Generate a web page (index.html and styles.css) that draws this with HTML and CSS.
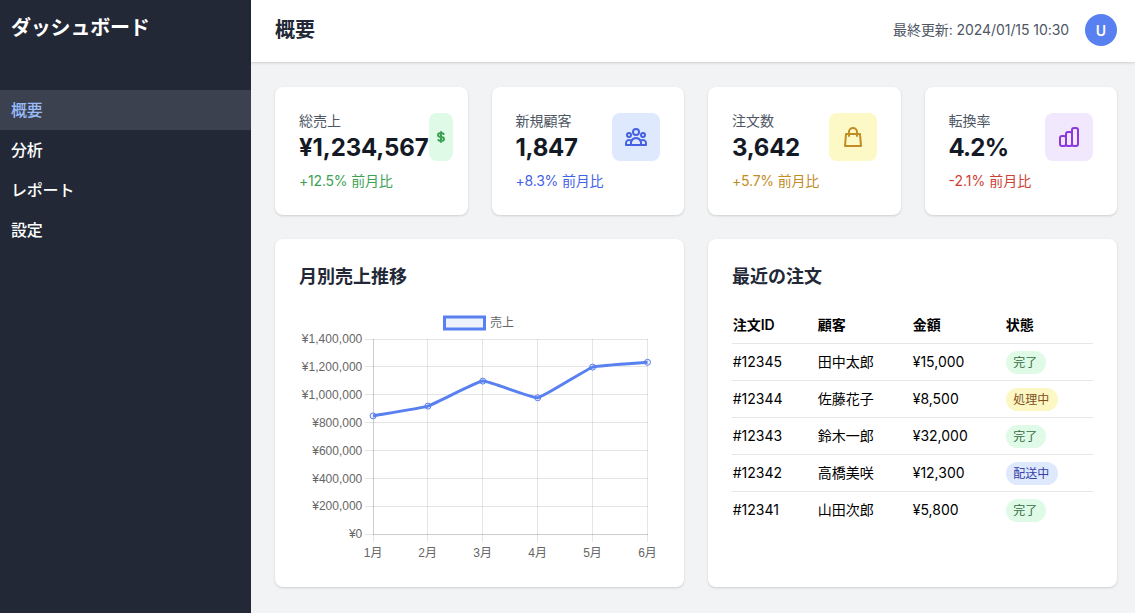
FILE: index.html
```html
<!DOCTYPE html>
<html lang="ja">
<head>
<meta charset="utf-8">
<title>ダッシュボード</title>
<link rel="stylesheet" href="styles.css">
</head>
<body>
<div class="app">
  <aside class="sidebar">
    <h1 class="brand">ダッシュボード</h1>
    <nav class="nav">
      <a class="nav-item active">概要</a>
      <a class="nav-item">分析</a>
      <a class="nav-item">レポート</a>
      <a class="nav-item">設定</a>
    </nav>
  </aside>
  <div class="main">
    <header class="header">
      <h2 class="page-title">概要</h2>
      <div class="header-right">
        <span class="updated">最終更新: 2024/01/15 10:30</span>
        <div class="avatar">U</div>
      </div>
    </header>
    <main class="content">
      <section class="stats">
        <div class="card stat green">
          <div class="stat-text"><p class="label">総売上</p><p class="value">¥1,234,567</p><p class="delta">+12.5% 前月比</p></div>
          <div class="icon narrow"><svg viewBox="0 0 24 24"><path d="M12 8c-1.657 0-3 .895-3 2s1.343 2 3 2 3 .895 3 2-1.343 2-3 2m0-8c1.11 0 2.08.402 2.599 1M12 8V7m0 1v8m0 0v1m0-1c-1.11 0-2.08-.402-2.599-1"/></svg></div>
        </div>
        <div class="card stat blue">
          <div class="stat-text"><p class="label">新規顧客</p><p class="value">1,847</p><p class="delta">+8.3% 前月比</p></div>
          <div class="icon"><svg viewBox="0 0 24 24"><path d="M17 20h5v-2a3 3 0 00-5.356-1.857M17 20H7m10 0v-2c0-.656-.126-1.283-.356-1.857M7 20H2v-2a3 3 0 015.356-1.857M7 20v-2c0-.656.126-1.283.356-1.857m0 0a5.002 5.002 0 019.288 0M15 7a3 3 0 11-6 0 3 3 0 016 0zm6 3a2 2 0 11-4 0 2 2 0 014 0zM7 10a2 2 0 11-4 0 2 2 0 014 0z"/></svg></div>
        </div>
        <div class="card stat yellow">
          <div class="stat-text"><p class="label">注文数</p><p class="value">3,642</p><p class="delta">+5.7% 前月比</p></div>
          <div class="icon"><svg viewBox="0 0 24 24"><path d="M16 11V7a4 4 0 00-8 0v4M5 9h14l1 12H4L5 9z"/></svg></div>
        </div>
        <div class="card stat purple">
          <div class="stat-text"><p class="label">転換率</p><p class="value">4.2%</p><p class="delta">-2.1% 前月比</p></div>
          <div class="icon"><svg viewBox="0 0 24 24"><path d="M9 19v-6a2 2 0 00-2-2H5a2 2 0 00-2 2v6a2 2 0 002 2h2a2 2 0 002-2zm0 0V9a2 2 0 012-2h2a2 2 0 012 2v10m-6 0a2 2 0 002 2h2a2 2 0 002-2m0 0V5a2 2 0 012-2h2a2 2 0 012 2v14a2 2 0 01-2 2h-2a2 2 0 01-2-2z"/></svg></div>
        </div>
      </section>
      <section class="panels">
        <div class="card panel">
          <h3 class="panel-title">月別売上推移</h3>
          <svg class="chart" viewBox="299 307 361 256">
            <rect class="legend-box" x="444.5" y="317" width="40" height="12"/>
            <text x="490" y="327">売上</text>
            <g class="grid">
              <path d="M365 339.5H648M365 366.5H648M365 394.5H648M365 422.5H648M365 450.5H648M365 478.5H648M365 506.5H648M365 534.5H648"/>
              <path d="M373.5 339V542M427.5 339V542M482.5 339V542M537.5 339V542M592.5 339V542M647.5 339V542"/>
              <path d="M373.5 339V534M373 534.5H648"/>
            </g>
            <g class="y-labels">
              <text x="362.300" y="343" textLength="60.500">¥1,400,000</text>
              <text x="362.300" y="371" textLength="60.500">¥1,200,000</text>
              <text x="362.300" y="399" textLength="60.500">¥1,000,000</text>
              <text x="362.300" y="427">¥800,000</text>
              <text x="362.300" y="455">¥600,000</text>
              <text x="362.300" y="483">¥400,000</text>
              <text x="362.300" y="510">¥200,000</text>
              <text x="362.300" y="538">¥0</text>
            </g>
            <g class="x-labels">
              <text x="373.200" y="557">1月</text>
              <text x="427.700" y="557">2月</text>
              <text x="482.700" y="557">3月</text>
              <text x="537.700" y="557">4月</text>
              <text x="592.500" y="557">5月</text>
              <text x="647.500" y="557">6月</text>
            </g>
            <path class="line" d="M373.100 415.900C378.600 414.900 422.400 407.800 427.900 406.100C433.400 404.400 477.300 381.500 482.800 381.100C488.300 380.700 532.200 398.500 537.700 397.800C543.200 397.100 587.100 368.900 592.600 367.100C598.100 365.300 642 362.800 647.500 362.300"/>
            <g class="points">
              <circle cx="373.100" cy="415.900" r="3"/><circle cx="427.900" cy="406.100" r="3"/><circle cx="482.800" cy="381.100" r="3"/><circle cx="537.700" cy="397.800" r="3"/><circle cx="592.600" cy="367.100" r="3"/><circle cx="647.500" cy="362.300" r="3"/>
            </g>
          </svg>
        </div>
        <div class="card panel">
          <h3 class="panel-title">最近の注文</h3>
          <table class="orders">
            <thead><tr><th class="c-id">注文ID</th><th class="c-name">顧客</th><th class="c-sum">金額</th><th>状態</th></tr></thead>
            <tbody>
              <tr><td>#12345</td><td>田中太郎</td><td>¥15,000</td><td class="c-state"><span class="badge done">完了</span></td></tr>
              <tr><td>#12344</td><td>佐藤花子</td><td>¥8,500</td><td class="c-state"><span class="badge pending">処理中</span></td></tr>
              <tr><td>#12343</td><td>鈴木一郎</td><td>¥32,000</td><td class="c-state"><span class="badge done">完了</span></td></tr>
              <tr><td>#12342</td><td>高橋美咲</td><td>¥12,300</td><td class="c-state"><span class="badge shipping">配送中</span></td></tr>
              <tr><td>#12341</td><td>山田次郎</td><td>¥5,800</td><td class="c-state"><span class="badge done">完了</span></td></tr>
            </tbody>
          </table>
        </div>
      </section>
    </main>
  </div>
</div>
</body>
</html>
```
FILE: styles.css
```css
* { box-sizing: border-box; margin: 0; padding: 0; }
body { font-family: Inter, "Noto Sans CJK JP", sans-serif; background: #f2f3f5; color: #000; overflow: hidden; }
.app { display: flex; height: 613px; }
.sidebar { width: 251px; flex: none; background: #222835; color: #fff; }
.brand { height: 90px; padding: 13px 11px; font-size: 20px; line-height: 30px; font-weight: 700; letter-spacing: -0.2px; }
.nav-item { display: block; height: 40px; padding: 0 11px; font-size: 16px; line-height: 40px; font-weight: 500; letter-spacing: -0.2px; }
.nav-item.active { background: #3b414f; color: #99bbf8; }
.main { flex: 1; min-width: 0; }
.header { display: flex; justify-content: space-between; align-items: center; height: 62px; padding: 0 18px 2px 24px; background: #fff; box-shadow: 0 1px 3px rgba(0,0,0,.1), 0 1px 2px rgba(0,0,0,.06); }
.page-title { font-size: 20px; line-height: 28px; font-weight: 600; color: #222835; }
.header-right { display: flex; align-items: center; gap: 16px; }
.updated { font-size: 14px; line-height: 20px; letter-spacing: -0.07px; color: #4e5664; }
.avatar { display: flex; align-items: center; justify-content: center; width: 32px; height: 32px; border-radius: 50%; background: #5980f1; color: #fff; font-size: 14px; font-weight: 600; }
.content { padding: 25px 18px 26px 24px; }
.stats { display: grid; grid-template-columns: repeat(4, minmax(0, 1fr)); gap: 24px; }
.card { background: #fff; border-radius: 8px; box-shadow: 0 1px 3px rgba(0,0,0,.1), 0 1px 2px rgba(0,0,0,.06); }
.stat { display: flex; justify-content: space-between; height: 128px; padding: 24px; }
.label { font-size: 14px; line-height: 20px; color: #4e5664; white-space: nowrap; }
.value { padding-top: 1px; font-size: 24px; line-height: 32px; font-weight: 700; letter-spacing: -0.25px; color: #141926; white-space: nowrap; }
.delta { margin-top: 7px; font-size: 14px; line-height: 20px; letter-spacing: -0.2px; white-space: nowrap; }
.icon { display: flex; justify-content: center; align-items: center; width: 48px; height: 48px; margin-top: 2px; border-radius: 8px; flex: none; }
.icon.narrow { width: 24px; }
.green .value { letter-spacing: -0.12px; }
.purple .value { letter-spacing: -0.8px; }
.icon svg { width: 24px; height: 24px; flex: none; fill: none; stroke: currentColor; stroke-width: 2; stroke-linecap: round; stroke-linejoin: round; }
.green .delta, .green .icon { color: #3da153; }
.green .icon { background: #dffbe8; }
.blue .delta, .blue .icon { color: #4462e3; }
.blue .icon { background: #dee9fd; }
.yellow .delta, .yellow .icon { color: #c18c24; }
.yellow .icon { background: #fcf9c7; }
.purple .icon { background: #f2e8fe; color: #8d37e0; }
.purple .delta { color: #cd4132; letter-spacing: 0; }
.panels { display: grid; grid-template-columns: repeat(2, minmax(0, 1fr)); gap: 24px; margin-top: 24px; }
.panel { height: 348px; padding: 24px; }
.panel-title { font-size: 18px; line-height: 28px; font-weight: 600; color: #222835; margin-bottom: 16px; }
.chart { display: block; width: 361px; height: 256px; font-family: "Liberation Sans", "Noto Sans CJK JP", sans-serif; font-size: 12px; fill: #666; }
.legend-box { fill: #edf2fd; stroke: #5980f1; stroke-width: 3; }
.grid { fill: none; stroke: rgba(0,0,0,.1); stroke-width: 1; }
.y-labels { text-anchor: end; }
.x-labels { text-anchor: middle; }
.line { fill: none; stroke: #5980f1; stroke-width: 3; }
.points { fill: rgba(89,128,241,.1); stroke: #5980f1; stroke-width: 1; }
.orders { width: 361px; table-layout: fixed; border-collapse: collapse; font-size: 14px; line-height: 20px; }
.orders tr { height: 37px; border-bottom: 1px solid #e6e7ea; }
.orders thead tr { height: 36px; }
.orders tbody tr:last-child { border-bottom: 0; }
.orders th, .orders td { padding: 0 .7px; text-align: left; vertical-align: middle; white-space: nowrap; }
.orders th { padding-top: 1px; font-weight: 600; }
.orders td.c-state { padding-top: 2px; }
.c-id { width: 85px; }
.c-name { width: 95px; }
.c-sum { width: 93px; }
.badge { display: inline-block; height: 23px; padding: 0 8.5px 0 7.5px; border-radius: 12px; font-size: 12px; line-height: 23px; vertical-align: middle; }
.done { background: #dffbe8; color: #356a42; }
.pending { background: #fcf7c3; color: #7c501e; }
.shipping { background: #dee9fd; color: #3741a8; }
```
